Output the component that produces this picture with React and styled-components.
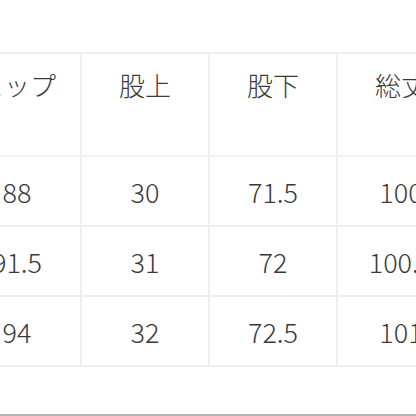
import React from "react";
import styled, { createGlobalStyle } from "styled-components";

const GlobalStyle = createGlobalStyle`
  html, body {
    margin: 0;
    padding: 0;
    background: #fff;
  }
`;

const columns = ["ヒップ", "股上", "股下", "総丈"];

const rows = [
  ["88", "30", "71.5", "100"],
  ["91.5", "31", "72", "100.5"],
  ["94", "32", "72.5", "101"],
];

const App = () => {
  return (
    <>
      <GlobalStyle />
      <Page>
        <Scroller>
          <SizeTable>
            <colgroup>
              {columns.map((c) => (
                <col key={c} />
              ))}
            </colgroup>
            <thead>
              <tr>
                {columns.map((c) => (
                  <HeadCell key={c}>{c}</HeadCell>
                ))}
              </tr>
            </thead>
            <tbody>
              {rows.map((r, i) => (
                <tr key={i}>
                  {r.map((v, j) => (
                    <Cell key={j}>{v}</Cell>
                  ))}
                </tr>
              ))}
            </tbody>
          </SizeTable>
        </Scroller>
        <BottomRule />
      </Page>
    </>
  );
};

export default App;

const Page = styled.div`
  width: 416px;
  height: 416px;
  overflow: hidden;
  display: flex;
  flex-direction: column;
  background: #fff;
  font-family: "Noto Sans CJK JP", "Noto Sans", sans-serif;
  font-weight: 300;
  color: #3a3a3a;
`;

const Scroller = styled.div`
  flex: 1;
  overflow: hidden;
  padding-top: 52px;
`;

const SizeTable = styled.table`
  border-collapse: collapse;
  table-layout: fixed;
  width: 512px;
  margin-left: -48px;

  col {
    width: 128px;
  }
`;

const HeadCell = styled.th`
  height: 103px;
  padding: 12px 0 0;
  box-sizing: border-box;
  border: 2px solid #efefef;
  vertical-align: top;
  text-align: center;
  font-size: 26px;
  font-weight: 300;
  line-height: 38px;
`;

const Cell = styled.td`
  height: 70px;
  padding: 0;
  box-sizing: border-box;
  border: 2px solid #efefef;
  vertical-align: middle;
  text-align: center;
  font-size: 27px;
  font-weight: 300;
  line-height: 1;
`;

const BottomRule = styled.div`
  height: 2px;
  background: #b4b4b4;
`;
